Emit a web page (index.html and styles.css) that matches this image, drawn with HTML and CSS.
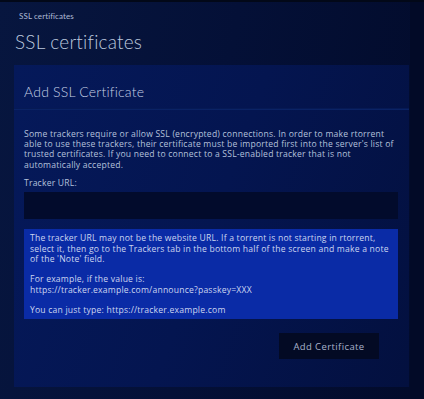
FILE: index.html
```html
<!DOCTYPE html>
<html lang="en">
<head>
    <meta charset="UTF-8">
    <meta name="viewport" content="width=device-width, initial-scale=1.0">
    <title>SSL certificates</title>
    <link rel="stylesheet" href="styles.css">
</head>
<body>
    <div class="page">
        <div class="breadcrumb">SSL certificates</div>
        <h1 class="title">SSL certificates</h1>

        <div class="card">
            <h2 class="card-title">Add SSL Certificate</h2>
            <div class="card-body">
                <p class="intro">Some trackers require or allow SSL (encrypted) connections. In order to make rtorrent able to use these trackers, their certificate must be imported first into the server's list of trusted certificates. If you need to connect to a SSL-enabled tracker that is not automatically accepted.</p>

                <label class="field-label" for="tracker">Tracker URL:</label>
                <input class="field-input" id="tracker" type="text">

                <div class="notice">
                    <p>The tracker URL may not be the website URL. If a torrent is not starting in rtorrent, select it, then go to the Trackers tab in the bottom half of the screen and make a note of the 'Note' field.</p>
                    <p>For example, if the value is:<br>https://tracker.example.com/announce?passkey=XXX</p>
                    <p>You can just type: https://tracker.example.com</p>
                </div>

                <div class="actions">
                    <button class="btn" type="button">Add Certificate</button>
                </div>
            </div>
        </div>
    </div>
</body>
</html>
```

FILE: styles.css
```css
html, body {
    height: 100%;
}
body {
    margin: 0;
    font-family: 'Open Sans', 'Liberation Sans', sans-serif;
    color: #b4c0d8;
    background: #020a27;
    border-top: 2px solid #020818;
    box-sizing: border-box;
    overflow: hidden;
}
.page {
    width: 410px;
    padding: 9px 0 0 14px;
    box-sizing: border-box;
    height: 100%;
    background: linear-gradient(100deg, #07163f 0%, #041037 50%, #020b2b 100%);
}
.breadcrumb {
    font-family: 'Lato', 'Liberation Sans', sans-serif;
    font-size: 8px;
    padding-left: 5px;
    color: #aebbd6;
    letter-spacing: 0.1px;
}
.title {
    font-family: 'Lato', 'Liberation Sans', sans-serif;
    margin: 9px 0 0 1px;
    font-size: 19px;
    font-weight: 300;
    color: #bcc8de;
    letter-spacing: 0.2px;
    line-height: 24px;
}
.card {
    margin-top: 11px;
    width: 395px;
    height: 322px;
    background: linear-gradient(110deg, #05195a 0%, #041550 50%, #03103f 100%);
}
.card-title {
    font-family: 'Lato', 'Liberation Sans', sans-serif;
    margin: 0;
    padding: 18px 10px 0;
    height: 25px;
    font-size: 14px;
    font-weight: 300;
    color: #c4cfe4;
    border-bottom: 1px solid #061a55;
    box-shadow: 0 1px 0 #0a2265;
    letter-spacing: 0.2px;
}
.card-body {
    padding: 20px 10px 0;
}
.intro {
    margin: 0;
    font-size: 8.6px;
    line-height: 10.2px;
    letter-spacing: 0.2px;
    color: #b4c1dc;
}
.field-label {
    display: block;
    margin-top: 8px;
    font-size: 8.6px;
    line-height: 11px;
    letter-spacing: 0.2px;
    color: #b4c1dc;
}
.field-input {
    display: block;
    margin-top: 3px;
    width: 374px;
    height: 27px;
    box-sizing: border-box;
    border: none;
    background: #020b2c;
    outline: none;
}
.notice {
    margin-top: 10px;
    width: 374px;
    box-sizing: border-box;
    padding: 4px 6px 3px;
    background: #0a2ba6;
    color: #ccd6f0;
    font-size: 8.6px;
    line-height: 10.7px;
    letter-spacing: 0.2px;
}
.notice p {
    margin: 0 0 9.5px;
}
.notice p:last-child {
    margin-bottom: 0;
}
.actions {
    width: 374px;
    margin-top: 14px;
    display: flex;
    justify-content: flex-end;
}
.btn {
    margin-right: 19px;
    width: 100px;
    height: 26px;
    border: none;
    background: #030a24;
    color: #a8b2ca;
    font-family: 'Open Sans', 'Liberation Sans', sans-serif;
    font-size: 9.5px;
    letter-spacing: 0.4px;
}
```
